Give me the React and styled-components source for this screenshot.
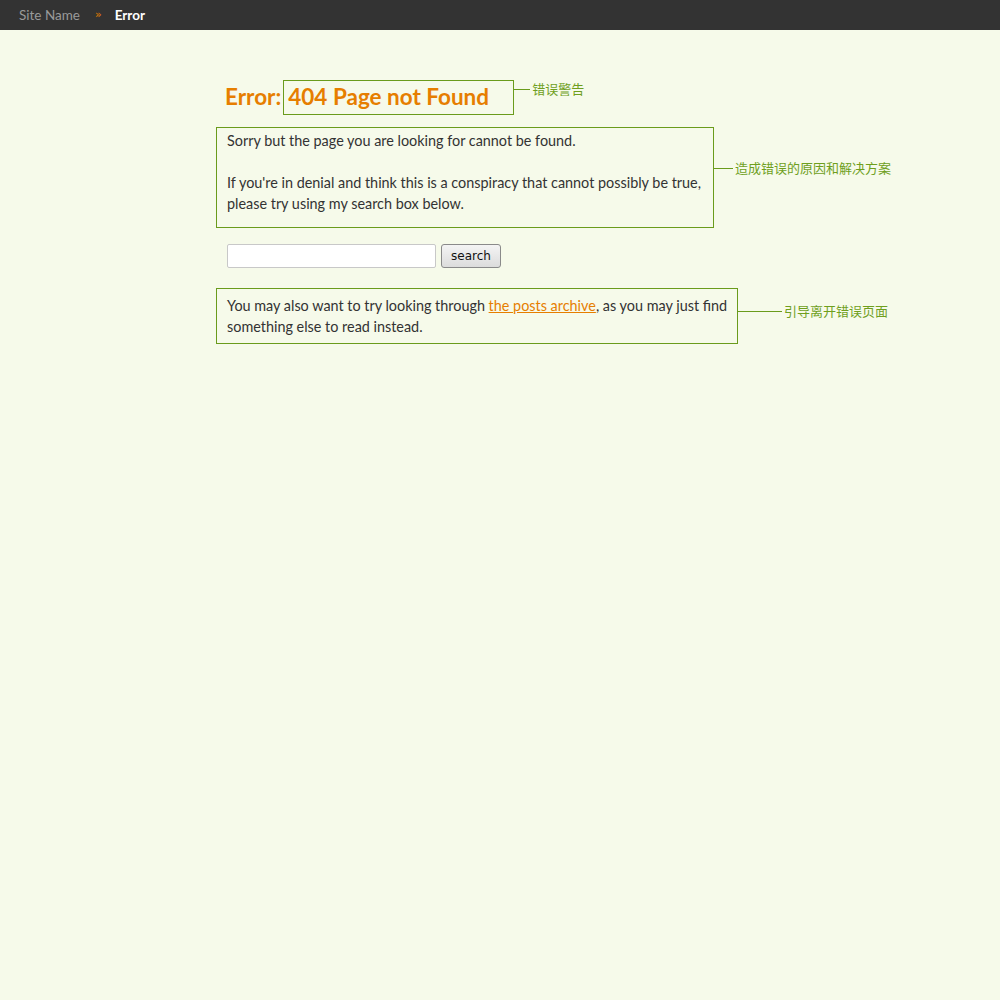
import React from "react";
import styled, { createGlobalStyle } from "styled-components";

const Global = createGlobalStyle`
  html, body { margin: 0; padding: 0; background: #f6faea; }
  body { font-family: Lato, "Noto Sans CJK SC", sans-serif; color: #333; font-size: 14px; min-height: 1000px; }
`;

const TopBar = styled.nav`
  height: 30px;
  background: #333333;
  display: flex;
  align-items: center;
  padding-left: 19px;
  padding-bottom: 1px;
  box-sizing: border-box;
  font-size: 13.5px;
`;

const Crumb = styled.span`
  color: ${(p) => (p.$current ? "#ffffff" : "#9a9a9a")};
  font-weight: ${(p) => (p.$current ? 700 : 400)};
`;

const Sep = styled.span`
  color: #e67e00;
  font-family: "DejaVu Sans", sans-serif;
  font-size: 11px;
  margin: 0 13px 0 15px;
`;

const Main = styled.main`
  padding: 50px 0 0 216px;
  display: flex;
  flex-direction: column;
  align-items: flex-start;
`;

const Heading = styled.h1`
  margin: 0 0 12px 9px;
  display: flex;
  align-items: center;
  font-size: 22.5px;
  font-weight: 700;
  color: #e67e00;
  line-height: 1;
`;

const Outlined = styled.div`
  position: relative;
  border: 1px solid #6a9b1c;
  box-sizing: border-box;
`;

const TitleBox = styled(Outlined)`
  margin-left: 2px;
  width: 231px;
  height: 35px;
  padding: 0 0 1px 4px;
  display: flex;
  align-items: center;
`;

const Note = styled.div`
  position: absolute;
  left: 100%;
  top: ${(p) => p.$top}px;
  display: flex;
  align-items: center;
  white-space: nowrap;
  font-size: 13px;
  font-weight: 400;
  color: #6f9f1d;
  font-family: "Noto Sans CJK SC", sans-serif;
  line-height: 16px;
  &::before {
    content: "";
    display: block;
    width: ${(p) => p.$line}px;
    height: 1px;
    background: #6a9b1c;
    margin-right: 2px;
  }
`;

const TextBox = styled(Outlined)`
  width: ${(p) => p.$w}px;
  padding: ${(p) => p.$pad};
  line-height: 21px;
  font-size: 14.4px;
  color: #333;
`;

const Para = styled.p`
  margin: 0 0 21px;
  &:last-of-type { margin-bottom: 0; }
`;

const SearchRow = styled.form`
  display: flex;
  gap: 5px;
  margin: 16px 0 20px 11px;
`;

const Input = styled.input`
  width: 209px;
  height: 24px;
  box-sizing: border-box;
  border: 1px solid #c8c8c8;
  border-radius: 2px;
  background: #fff;
`;

const Button = styled.button`
  width: 60px;
  height: 24px;
  box-sizing: border-box;
  border: 1px solid #8a8a8a;
  border-radius: 3px;
  background: linear-gradient(#f4f4f4, #dcdcdc);
  font-family: "DejaVu Sans", sans-serif;
  font-size: 12px;
  color: #111;
  padding: 0;
`;

const Link = styled.a`
  color: #e67e00;
  text-decoration: underline;
`;

export default function App() {
  return (
    <>
      <Global />
      <TopBar>
        <Crumb>Site Name</Crumb>
        <Sep>»</Sep>
        <Crumb $current>Error</Crumb>
      </TopBar>
      <Main>
        <Heading>
          Error:
          <TitleBox>
            404 Page not Found
            <Note $top={0} $line={17}>错误警告</Note>
          </TitleBox>
        </Heading>
        <TextBox $w={498} $pad="2px 10px 13px">
          <Para>Sorry but the page you are looking for cannot be found.</Para>
          <Para>
            If you're in denial and think this is a conspiracy that cannot possibly be true,
            please try using my search box below.
          </Para>
          <Note $top={32} $line={20}>造成错误的原因和解决方案</Note>
        </TextBox>
        <SearchRow onSubmit={(e) => e.preventDefault()}>
          <Input type="text" />
          <Button type="submit">search</Button>
        </SearchRow>
        <TextBox $w={522} $pad="6px 2px 6px 10px">
          You may also want to try looking through <Link href="#">the posts archive</Link>, as you
          may just find something else to read instead.
          <Note $top={14} $line={45}>引导离开错误页面</Note>
        </TextBox>
      </Main>
    </>
  );
}
